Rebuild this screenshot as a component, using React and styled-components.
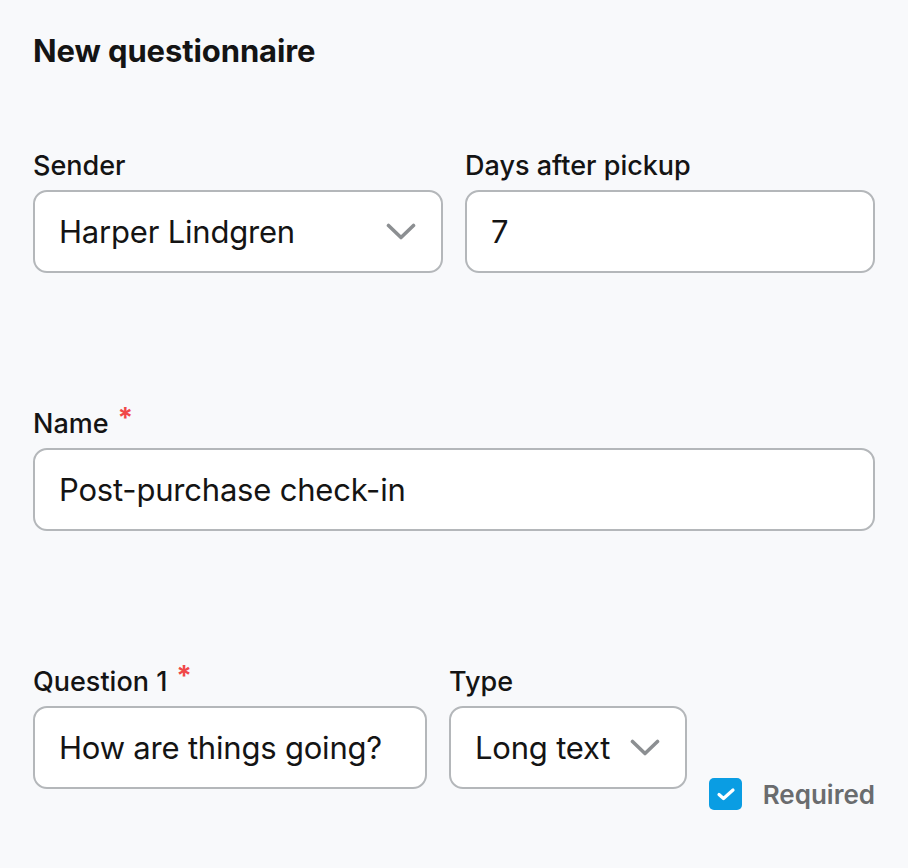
import React from 'react'
import styled, { createGlobalStyle } from 'styled-components'

const GlobalStyle = createGlobalStyle`
  * { box-sizing: border-box; }
  html, body { margin: 0; padding: 0; background: #f8f9fb; }
  body {
    font-family: Inter, "Noto Sans", "Liberation Sans", sans-serif;
    color: #141414;
  }
`;

const Page = styled.div`
  min-height: 100vh;
  padding: 33px;
  display: flex;
  flex-direction: column;
`;

const Title = styled.h1`
  margin: 0 0 81px;
  font-size: 31px;
  line-height: 36px;
  font-weight: 700;
  letter-spacing: -0.1px;
`;

const Section = styled.div`
  display: flex;
  gap: 22px;
  align-items: ${p => (p.$end ? 'flex-end' : 'stretch')};
  margin-bottom: ${p => (p.$last ? '0' : '134px')};
`;

const Field = styled.label`
  display: flex;
  flex-direction: column;
  gap: 8px;
  flex: ${p => (p.$width ? `0 0 ${p.$width}px` : '1 1 0')};
  min-width: 0;
`;

const LabelText = styled.span`
  font-size: 27px;
  line-height: 32px;
  font-weight: 500;
`;

const Star = styled.span`
  color: #f04848;
  font-size: 28px;
  font-weight: 700;
  margin-left: 9px;
  position: relative;
  top: -5px;
`;

const Input = styled.input`
  width: 100%;
  height: 83px;
  padding: 0 24px;
  border: 2px solid #b4b7ba;
  border-radius: 14px;
  background: #fff;
  font-family: inherit;
  font-size: 31px;
  letter-spacing: -0.2px;
  color: #141414;
  outline: none;
`;

const Select = styled.div`
  height: 83px;
  padding: 0 25px 0 24px;
  border: 2px solid #b4b7ba;
  border-radius: 14px;
  background: #fff;
  display: flex;
  align-items: center;
  justify-content: space-between;
  gap: 14px;
  font-size: 31px;
  letter-spacing: -0.2px;
  white-space: nowrap;
`;

const Chevron = styled.svg`
  flex: none;
  width: 30px;
  height: 18px;
`;

const Required = styled.div`
  flex: 1;
  display: flex;
  align-items: center;
  justify-content: space-between;
  margin-bottom: -21px;
`;

const Check = styled.span`
  width: 33px;
  height: 32px;
  border-radius: 5px;
  background: #0a9de3;
  display: flex;
  align-items: center;
  justify-content: center;
`;

const RequiredText = styled.span`
  font-size: 26px;
  font-weight: 600;
  color: #6a6c6e;
`;

const ChevronDown = () => (
  <Chevron viewBox="0 0 30 18" fill="none">
    <path d="M2.5 2.5 L15 14.5 L27.5 2.5" stroke="#8c8f92" strokeWidth="3.6" strokeLinecap="round" strokeLinejoin="round" />
  </Chevron>
);

const App = () => {
  return (
    <>
      <GlobalStyle />
      <Page>
        <Title>New questionnaire</Title>

        <Section>
          <Field>
            <LabelText>Sender</LabelText>
            <Select>
              Harper Lindgren
              <ChevronDown />
            </Select>
          </Field>
          <Field>
            <LabelText>Days after pickup</LabelText>
            <Input defaultValue="7" />
          </Field>
        </Section>

        <Section>
          <Field>
            <LabelText>Name<Star>*</Star></LabelText>
            <Input defaultValue="Post-purchase check-in" />
          </Field>
        </Section>

        <Section $end $last>
          <Field $width={394}>
            <LabelText>Question 1<Star>*</Star></LabelText>
            <Input defaultValue="How are things going?" />
          </Field>
          <Field $width={238}>
            <LabelText>Type</LabelText>
            <Select>
              Long text
              <ChevronDown />
            </Select>
          </Field>
          <Required>
            <Check>
              <svg width="20" height="14" viewBox="0 0 20 14" fill="none">
                <path d="M3 7.5 L7.5 11.5 L17 3" stroke="#fff" strokeWidth="3.2" strokeLinecap="round" strokeLinejoin="round" />
              </svg>
            </Check>
            <RequiredText>Required</RequiredText>
          </Required>
        </Section>
      </Page>
    </>
  )
}

export default App
